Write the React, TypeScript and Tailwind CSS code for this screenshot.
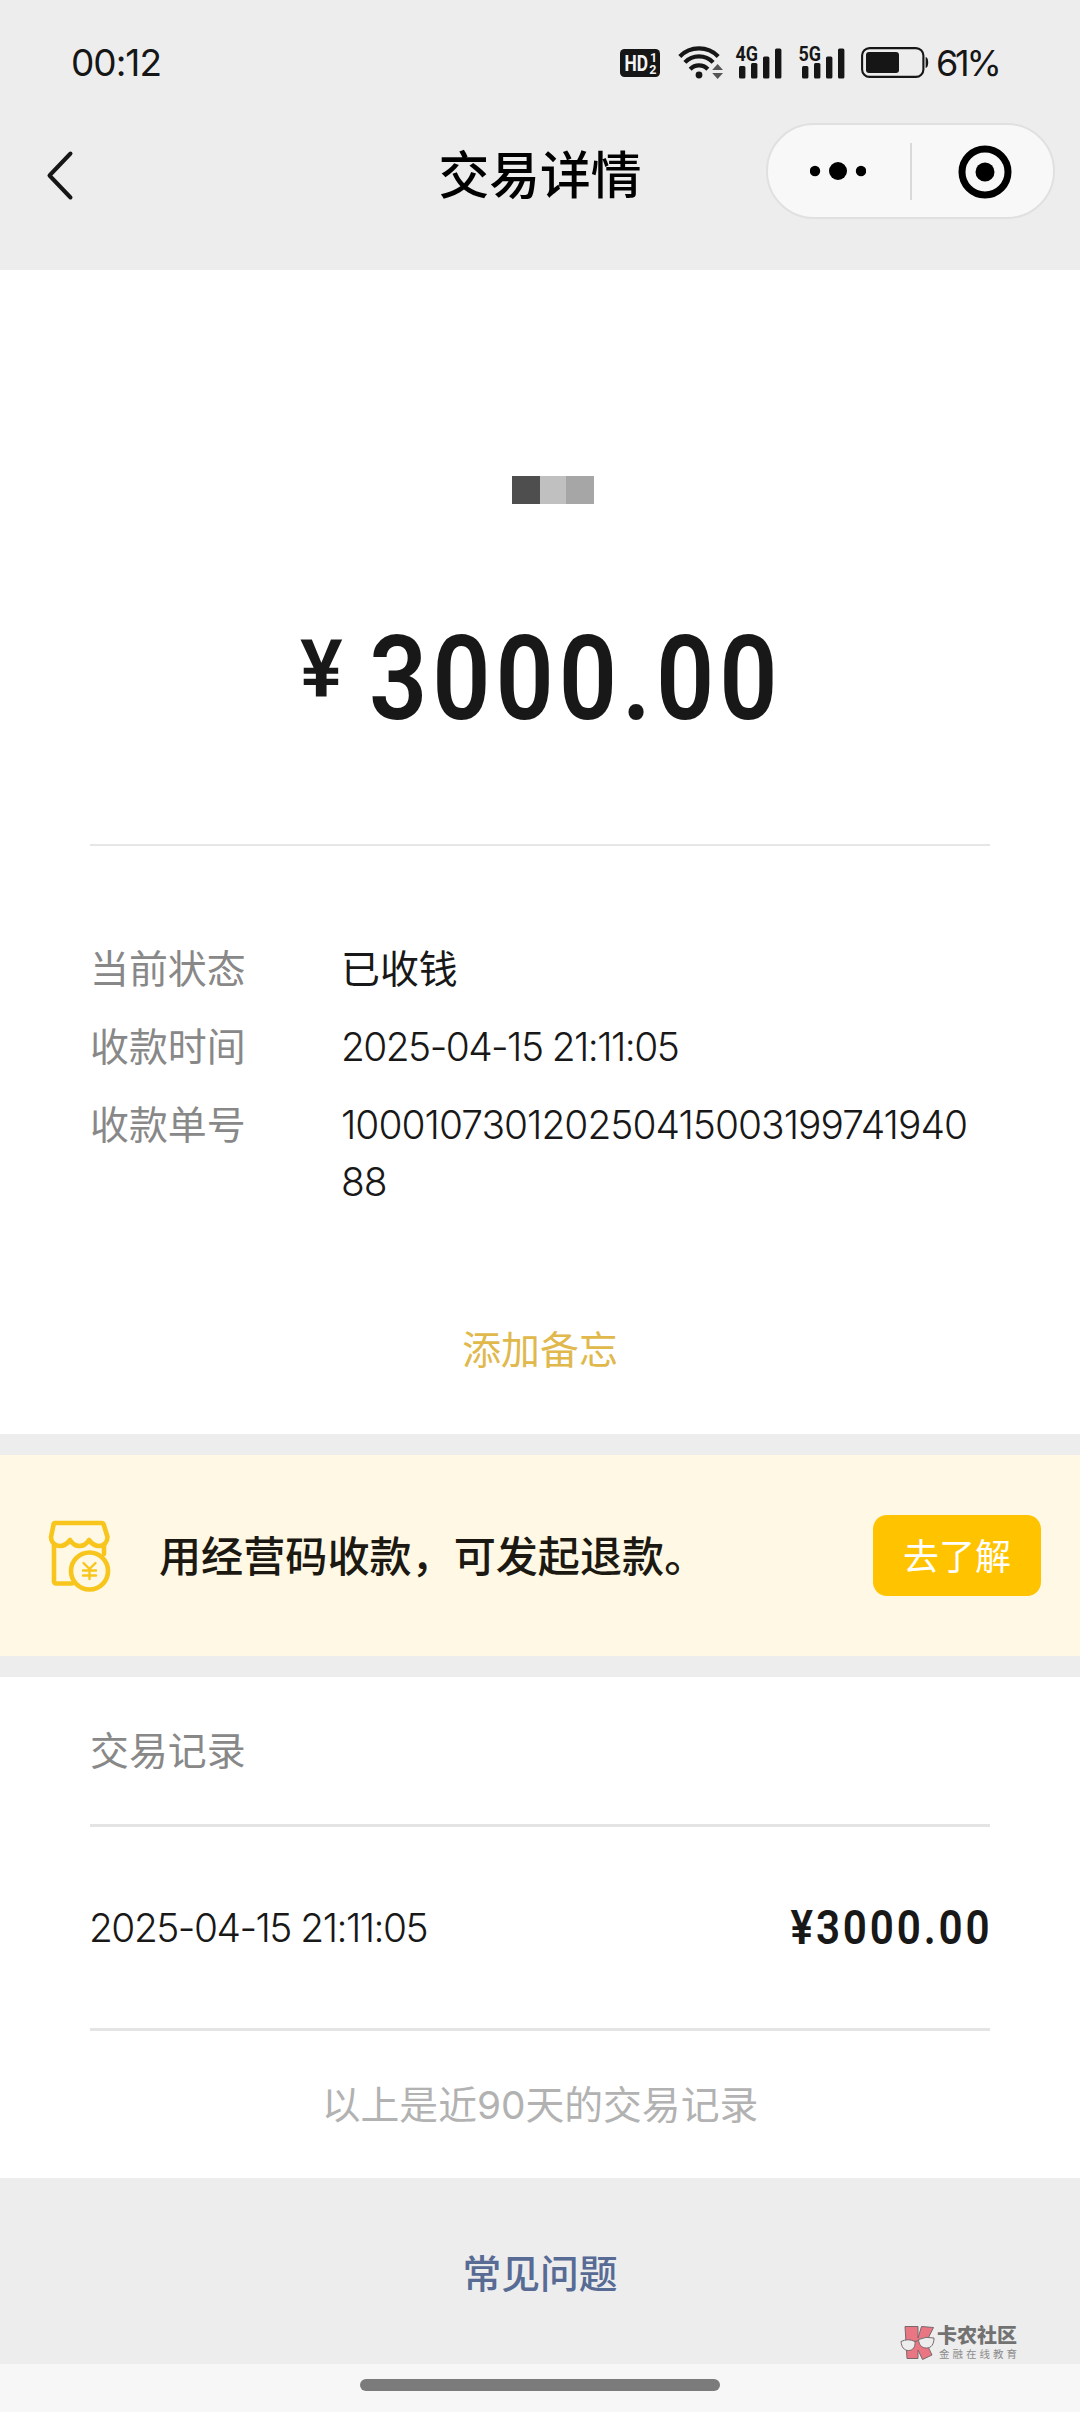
import React from "react";

function HdIcon() {
  return (
    <svg width="40" height="28" viewBox="0 0 40 28">
      <rect width="40" height="28" rx="4.5" fill="#161616" />
      <text x="4.5" y="22" fontFamily="Roboto, sans-serif" fontWeight="700" fontSize="21.5" textLength="23.5" lengthAdjust="spacingAndGlyphs" fill="#f4f4f4">HD</text>
      <text x="30" y="12.5" fontFamily="Roboto, sans-serif" fontWeight="700" fontSize="12.5" fill="#f4f4f4">1</text>
      <text x="29.3" y="24.5" fontFamily="Roboto, sans-serif" fontWeight="700" fontSize="12.5" fill="#f4f4f4">2</text>
    </svg>
  );
}

function WifiIcon() {
  return (
    <svg width="46" height="36" viewBox="0 0 46 36" fill="none" stroke="#161616" strokeWidth="4.2">
      <path d="M1.8 12.4A27 27 0 0 1 40.2 12.4" />
      <path d="M6.9 18.4A19.6 19.6 0 0 1 35.1 18.4" />
      <path d="M12.2 25.2A12.2 12.2 0 0 1 29.8 25.2" />
      <circle cx="21" cy="31" r="3.4" fill="#161616" stroke="none" />
      <path d="M39.6 20l5.4 6H34.2z" fill="#555" stroke="none" />
      <path d="M39.6 35l5.4-6H34.2z" fill="#555" stroke="none" />
    </svg>
  );
}

function SignalIcon({ label }: { label: string }) {
  return (
    <svg className="overflow-visible" width="48" height="36" viewBox="0 0 48 36" fill="#161616">
      <text x="0.5" y="17.4" fontFamily="Roboto, sans-serif" fontWeight="700" fontSize="20.5" textLength="22.5" lengthAdjust="spacingAndGlyphs">{label}</text>
      <rect x="4" y="22" width="6.4" height="12.5" rx="1.5" />
      <rect x="16" y="19" width="6.4" height="15.5" rx="1.5" />
      <rect x="28" y="12.5" width="6.4" height="22" rx="1.5" />
      <rect x="40" y="4.5" width="6.4" height="30" rx="1.5" />
    </svg>
  );
}

function BatteryIcon() {
  return (
    <svg width="68" height="32" viewBox="0 0 68 32">
      <rect x="1.1" y="1.1" width="61.3" height="28.8" rx="7.5" fill="none" stroke="#161616" strokeWidth="2.1" />
      <rect x="5" y="5" width="33" height="21" rx="3" fill="#161616" />
      <path d="M64.6 10c1.6.2 2.6 2 2.6 5.500s-1 5.300-2.600 5.500z" fill="#161616" />
    </svg>
  );
}

function StatusBar() {
  return (
    <div className="flex h-[123px] items-start justify-between pl-[71px] pr-[81px] pt-[43px]">
      <div className="h-10 text-[37px] leading-10 tracking-[-1px]">00:12</div>
      <div className="flex h-10 items-center">
        <HdIcon />
        <div className="ml-[18px] mt-[-3px]"><WifiIcon /></div>
        <div className="ml-[11px] mt-[-3px]"><SignalIcon label="4G" /></div>
        <div className="ml-[15px] mt-[-3px]"><SignalIcon label="5G" /></div>
        <div className="ml-[15px]"><BatteryIcon /></div>
        <div className="ml-[7px] w-[63px] whitespace-nowrap text-[36px] leading-10 tracking-[-3.2px]">61%</div>
      </div>
    </div>
  );
}

function NavBar() {
  return (
    <div className="grid h-[147px] grid-cols-[1fr_auto_1fr] items-start">
      <svg className="ml-[46px] mt-[27px]" width="30" height="52" viewBox="0 0 30 52" fill="none" stroke="#161616" strokeWidth="4" strokeLinecap="round" strokeLinejoin="round">
        <path d="M24.5 3.5L3.5 25.5L24.5 47.5" />
      </svg>
      <h1 className="mt-[23px] text-[50.8px] font-medium leading-[60px] text-black">交易详情</h1>
      <div className="mr-[25px] flex h-24 w-[289px] items-center justify-self-end rounded-full border-2 border-[#e0e0e0] bg-[#f8f8f8]">
        <svg className="ml-[42px]" width="56" height="20" viewBox="0 0 56 20" fill="#000">
          <circle cx="5" cy="10" r="5.2" />
          <circle cx="28" cy="10" r="9" />
          <circle cx="51" cy="10" r="5.2" />
        </svg>
        <div className="ml-[44px] h-[57px] w-[2px] bg-[#d9d9d9]" />
        <svg className="ml-[46px] mt-px" width="54" height="54" viewBox="0 0 54 54">
          <circle cx="27" cy="27" r="23" fill="none" stroke="#000" strokeWidth="7" />
          <circle cx="27" cy="27" r="9.5" fill="#000" />
        </svg>
      </div>
    </div>
  );
}

function DetailRow({ label, value, valueClass }: { label: string; value: string; valueClass: string }) {
  return (
    <div className="mb-[21px] flex text-[38.9px] leading-[57px]">
      <div className="w-[251px] text-[#888]">{label}</div>
      <div className={"w-[636px] break-all text-[#181818] " + valueClass}>{value}</div>
    </div>
  );
}

function ShopIcon() {
  return (
    <svg width="64" height="74" viewBox="0 0 64 74" fill="none" stroke="#f8c51c" strokeWidth="4.6" strokeLinejoin="round" strokeLinecap="round">
      <path d="M7 4H53a3 3 0 0 1 3 2.5L59.5 18c0 5-3.5 9-8.5 9-4 0-7-2-10-6-2.5 4-5.5 6-9.5 6s-7-2-9.5-6c-3 4-6 6-10 6-5 0-9-4-9-9L5.5 6A2 2 0 0 1 7 4z" />
      <path d="M6 26V62.5a2 2 0 0 0 2 2H24M56 26V35" />
      <circle cx="41.5" cy="52" r="18.5" fill="#fff8e5" />
      <path d="M35.5 44L41.5 50L47.5 44M35 51.5H48M35 56.5H48M41.5 50V60" strokeWidth="2.4" />
    </svg>
  );
}

function KnLogo() {
  return (
    <svg width="36" height="36" viewBox="0 0 36 36" stroke="#77696b" strokeWidth="1">
      <path d="M5 1.5H18V13L21.5 1.5L33.5 2.5L26 17.5L32 30L22.5 34.5L18 25V33.5H7z" fill="#ea7583" />
      <path d="M1 16.5Q8 13 15 16.5C15.5 22 13 25.5 8.5 25.5S1.5 22 1 16.5z" fill="#ededed" />
      <path d="M18.5 14.5Q26 11 34 13C34 19 31.5 23 26.5 23S19 20 18.5 14.5z" fill="#ededed" />
      <path d="M15 16.5L18.5 15.5" fill="none" />
    </svg>
  );
}

export default function App() {
  return (
    <div className="flex h-[2412px] w-[1080px] flex-col overflow-hidden bg-[#ededed] font-[Inter,'Noto_Sans_CJK_SC',sans-serif] text-[#161616]">
      <StatusBar />
      <NavBar />

      <section className="flex h-[1164px] flex-col bg-white px-[90px]">
        <div className="ml-[422px] mt-[206px] flex h-[28px]">
          <div className="w-[28px] bg-[#4e4e4e]" />
          <div className="w-[26px] bg-[#c0c0c0]" />
          <div className="w-[28px] bg-[#a6a6a6]" />
        </div>
        <div className="mt-[105px] flex h-[138px] items-start pl-[210px] font-[Roboto,sans-serif] font-semibold leading-[140px] text-[#181818]">
          <span className="mt-[-10px] w-[69px] text-[80px]">¥</span>
          <span className="origin-left scale-x-88 text-[116px] tracking-[5.6px]">3000.00</span>
        </div>
        <div className="mt-[97px] h-[2px] bg-[#e6e6e6]" />
        <div className="mt-[94px]">
          <DetailRow label="当前状态" value="已收钱" valueClass="" />
          <DetailRow label="收款时间" value="2025-04-15 21:11:05" valueClass="font-light tracking-[-1.55px]" />
          <DetailRow label="收款单号" value="10001073012025041500319974194088" valueClass="font-light tracking-[-0.95px]" />
        </div>
        <a className="mt-[90px] text-center text-[38.9px] leading-[57px] text-[#e0b84c]">添加备忘</a>
      </section>

      <section className="mt-[21px] flex h-[201px] items-center bg-[#fff8e5] pl-[48px] pr-[39px]">
        <ShopIcon />
        <p className="ml-[47px] mt-[3px] text-[42.1px] font-medium leading-[60px] text-[#1c1812]">用经营码收款，可发起退款。</p>
        <button className="ml-auto h-[81px] w-[168px] rounded-[14px] bg-[#ffc300] pt-[3px] text-[36px] leading-[78px] text-white">去了解</button>
      </section>

      <section className="mt-[21px] h-[501px] bg-white px-[90px]">
        <h2 className="h-[147px] text-[38.9px] leading-[148px] text-[#888]">交易记录</h2>
        <div className="flex h-[207px] items-center justify-between border-y-3 border-[#e4e4e4]">
          <span className="ml-[-1px] mt-[2px] text-[38.9px] font-light tracking-[-1.5px] text-[#181818]">2025-04-15 21:11:05</span>
          <span className="mr-[-2px] mt-px origin-right scale-x-88 font-[Roboto,sans-serif] text-[48px] font-semibold tracking-[3.2px] text-[#181818]">¥3000.00</span>
        </div>
        <p className="text-center text-[38.8px] leading-[148px] text-[#b2b2b2]">以上是近90天的交易记录</p>
      </section>

      <footer className="flex h-[186px] flex-col">
        <a className="mt-[65px] text-center text-[38.8px] font-medium leading-[62px] text-[#576b95]">常见问题</a>
        <div className="ml-[900px] mt-[20px] flex h-[36px]">
          <KnLogo />
          <div className="ml-[1px] whitespace-nowrap">
            <div className="text-[20px] font-black leading-[23px] text-[#727272]">卡农社区</div>
            <div className="pl-[2px] text-[10.5px] leading-[13px] tracking-[3px] text-[#8c8c8c]">金融在线教育</div>
          </div>
        </div>
      </footer>

      <div className="flex flex-1 justify-center bg-[#f7f7f7] pt-[15px]">
        <div className="h-3 w-[360px] rounded-full bg-[#7b7b7b]" />
      </div>
    </div>
  );
}
